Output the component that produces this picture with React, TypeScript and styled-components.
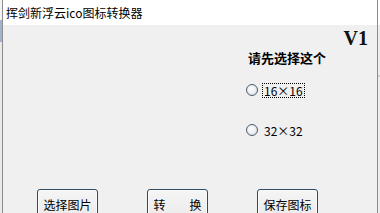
import styled, { createGlobalStyle } from "styled-components";

const GlobalStyle = createGlobalStyle`
  html, body {
    margin: 0;
    padding: 0;
  }
  body {
    background: #e6e8eb;
    font-family: "Noto Sans CJK SC", "Noto Sans", sans-serif;
  }
`;

const cjk = `"Noto Sans CJK SC", "Noto Sans", sans-serif`;

const Desktop = styled.div`
  display: flex;
  width: 380px;
  height: 213px;
  overflow: hidden;
`;

const EdgeStrip = styled.div<{ $side: "left" | "right" }>`
  flex: none;
  width: 2px;
  background: ${(p) =>
    p.$side === "left"
      ? "linear-gradient(#f4f4f4 0 20px, #9fb4cc 20px 42px, #e9e9e9 42px)"
      : "linear-gradient(#ffffff 0 25px, #eeeeee 25px 75px, #c9d1c9 75px 77px, #eeeeee 77px)"};
`;

const Window = styled.div`
  flex: 1;
  display: flex;
  flex-direction: column;
  border-left: 1px solid #8c8c8c;
  border-right: 1px solid #8c8c8c;
  background: #f0f0f0;
`;

const TitleBar = styled.div`
  height: 25px;
  padding-left: 3px;
  background: #ffffff;
  color: #000;
  font: 12px/25px ${cjk};
  white-space: nowrap;
`;

const Body = styled.div`
  flex: 1;
  display: flex;
  flex-direction: column;
  padding: 3px 9px 0 0;
  overflow: hidden;
`;

const VersionTag = styled.div`
  align-self: flex-end;
  font: bold 20px/21px "Liberation Serif", serif;
  color: #111;
`;

const Content = styled.div`
  display: grid;
  grid-template-columns: 243px 1fr;
`;

const Preview = styled.div``;

const OptionsPanel = styled.div`
  display: flex;
  flex-direction: column;
  padding-top: 1px;
`;

const Heading = styled.div`
  margin-left: 2px;
  font: bold 13px/16px ${cjk};
  color: #000;
`;

const RadioRow = styled.label<{ $offset: number }>`
  display: flex;
  align-items: center;
  gap: 5px;
  height: 16px;
  margin-top: ${(p) => p.$offset}px;
`;

const RadioDot = styled.span`
  flex: none;
  box-sizing: border-box;
  width: 12px;
  height: 12px;
  border: 1px solid #4d5b6b;
  border-radius: 50%;
  background: radial-gradient(circle at 45% 40%, #ffffff 0%, #eef0f2 45%, #cfd4d9 100%);
`;

const RadioText = styled.span<{ $focused?: boolean }>`
  padding: 0 1px;
  font: 12px/13px ${cjk};
  color: #000;
  outline: ${(p) => (p.$focused ? "1px dotted #000" : "none")};
`;

const ButtonRow = styled.div`
  display: flex;
  gap: 49px;
  padding-left: 34px;
  margin-top: 51px;
`;

const Button = styled.button`
  flex: none;
  display: flex;
  align-items: center;
  justify-content: center;
  box-sizing: border-box;
  width: 61px;
  height: 32px;
  padding: 0;
  border: 1px solid #2f4a63;
  border-radius: 3px;
  background: linear-gradient(#f5f5f5, #eaeaea);
  box-shadow: inset 0 0 0 1px #fbfbfb;
  color: #000;
  font: 12px/16px ${cjk};
  white-space: pre;
`;

export default function App() {
  return (
    <>
      <GlobalStyle />
      <Desktop>
        <EdgeStrip $side="left" />
        <Window>
          <TitleBar>挥剑新浮云ico图标转换器</TitleBar>
          <Body>
            <VersionTag>V1</VersionTag>
            <Content>
              <Preview />
              <OptionsPanel>
                <Heading>请先选择这个</Heading>
                <RadioRow $offset={16}>
                  <RadioDot />
                  <RadioText $focused>16×16</RadioText>
                </RadioRow>
                <RadioRow $offset={24}>
                  <RadioDot />
                  <RadioText>32×32</RadioText>
                </RadioRow>
              </OptionsPanel>
            </Content>
            <ButtonRow>
              <Button>选择图片</Button>
              <Button>转　　换</Button>
              <Button>保存图标</Button>
            </ButtonRow>
          </Body>
        </Window>
        <EdgeStrip $side="right" />
      </Desktop>
    </>
  );
}
